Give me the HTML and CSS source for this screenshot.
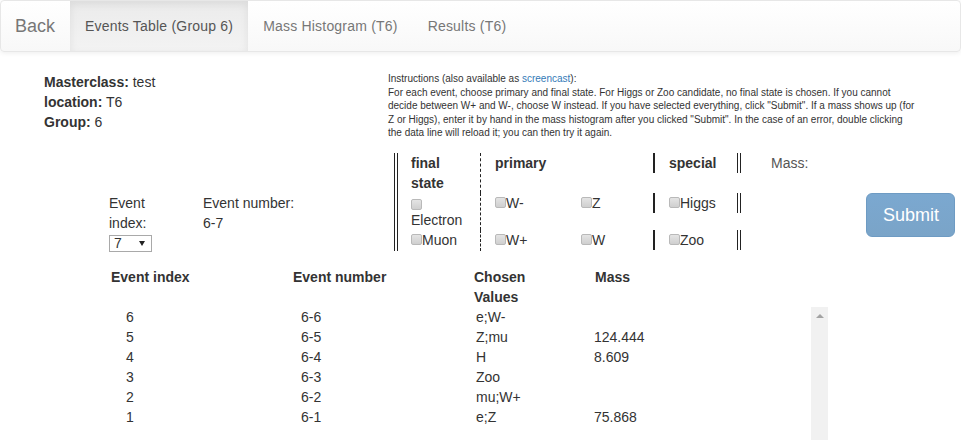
FILE: index.html
```html
<!DOCTYPE html>
<html lang="en">
<head>
    <meta charset="UTF-8">
    <title>Events Table (Group 6)</title>
    <link rel="stylesheet" href="styles.css">
</head>
<body>

    <!-- Navigation -->
    <nav class="navbar">
        <a class="brand" href="#">Back</a>
        <ul class="nav">
            <li class="active"><a href="#">Events Table (Group 6)</a></li>
            <li><a href="#">Mass Histogram (T6)</a></li>
            <li><a href="#">Results (T6)</a></li>
        </ul>
    </nav>

    <!-- Masterclass info + instructions -->
    <div class="top">
        <div class="info">
            <div><b>Masterclass:</b> test</div>
            <div><b>location:</b> T6</div>
            <div><b>Group:</b> 6</div>
        </div>
        <div class="instructions">
            Instructions (also available as <a href="#">screencast</a>):<br>
            For each event, choose primary and final state. For Higgs or Zoo candidate, no final state is chosen. If you cannot<br>
            decide between W+ and W-, choose W instead. If you have selected everything, click "Submit". If a mass shows up (for<br>
            Z or Higgs), enter it by hand in the mass histogram after you clicked "Submit". In the case of an error, double clicking<br>
            the data line will reload it; you can then try it again.
        </div>
    </div>

    <!-- Entry form -->
    <form class="entry">
        <div class="ev-index">
            <div>Event</div>
            <div>index:</div>
            <span class="ev-select">
                <select>
                    <option>7</option>
                </select>
            </span>
        </div>
        <div class="ev-number">
            <div>Event number:</div>
            <div>6-7</div>
        </div>

        <div class="final head">final<br>state</div>
        <div class="primary head">primary</div>
        <div class="special head"><span>special</span></div>
        <div class="mass-label">Mass:</div>

        <div class="final"><input type="checkbox" class="block-box">Electron</div>
        <div class="prim"><label><input type="checkbox">W-</label></div>
        <div class="prim"><label><input type="checkbox">Z</label></div>
        <div class="special"><label><input type="checkbox">Higgs</label></div>
        <button class="submit" type="button" disabled>Submit</button>

        <div class="final"><label><input type="checkbox">Muon</label></div>
        <div class="prim"><label><input type="checkbox">W+</label></div>
        <div class="prim"><label><input type="checkbox">W</label></div>
        <div class="special"><label><input type="checkbox">Zoo</label></div>
    </form>

    <!-- Events table -->
    <div class="events">
        <div class="events-head">
            <div>Event index</div>
            <div>Event number</div>
            <div>Chosen<br>Values</div>
            <div>Mass</div>
        </div>
        <div class="events-body">
            <div class="events-rows">
                <div>6</div><div>6-6</div><div>e;W-</div><div></div>
                <div>5</div><div>6-5</div><div>Z;mu</div><div>124.444</div>
                <div>4</div><div>6-4</div><div>H</div><div>8.609</div>
                <div>3</div><div>6-3</div><div>Zoo</div><div></div>
                <div>2</div><div>6-2</div><div>mu;W+</div><div></div>
                <div>1</div><div>6-1</div><div>e;Z</div><div>75.868</div>
            </div>
            <div class="rail"></div>
        </div>
    </div>

</body>
</html>
```

FILE: styles.css
```css
/* General Reset */
* {
    box-sizing: border-box;
}

body {
    margin: 0;
    font-family: "Liberation Sans", Arial, sans-serif;
    font-size: 14px;
    line-height: 20px;
    color: #333;
    background-color: #fff;
}

a {
    color: #337ab7;
    text-decoration: none;
}

/* Navbar */
.navbar {
    display: flex;
    height: 52px;
    margin-bottom: 20px;
    border: 1px solid #e7e7e7;
    border-radius: 4px;
    background-image: linear-gradient(to bottom, #fff 0, #f8f8f8 100%);
    box-shadow: inset 0 1px 0 rgba(255, 255, 255, 0.15), 0 1px 5px rgba(0, 0, 0, 0.075);
}

.navbar .brand {
    padding: 15px 15px 15px 14px;
    font-size: 18px;
    line-height: 20px;
    color: #777;
}

.nav {
    display: flex;
    list-style: none;
    margin: 0;
    padding: 0;
}

.nav a {
    display: block;
    padding: 15px;
    color: #777;
    letter-spacing: 0.2px;
}

.nav .active a {
    color: #555;
    background-image: linear-gradient(to bottom, #ebebeb 0, #f3f3f3 100%);
    box-shadow: inset 0 3px 9px rgba(0, 0, 0, 0.075);
}

/* Info and instructions */
.top {
    display: flex;
}

.info {
    width: 388px;
    padding-left: 44px;
}

.instructions {
    font-size: 10px;
    line-height: 13.5px;
    white-space: nowrap;
}

/* Entry form */
.entry {
    display: grid;
    grid-template-columns: 94px 191px 87px 86px 86px 88px 125px 89px;
    grid-template-rows: 40px 37px 21px;
    margin: 13px 0 0 109px;
}

.ev-index,
.ev-number {
    grid-row: 2 / 4;
}

.ev-select {
    position: relative;
    display: inline-block;
    margin-top: 2px;
}

.ev-select select {
    display: block;
    width: 43px;
    height: 17px;
    padding: 0 0 0 4px;
    border: 1px solid #a9a9a9;
    border-radius: 0;
    background: #fff;
    color: #333;
    font: 14px/15px "Liberation Sans", Arial, sans-serif;
    appearance: none;
    -webkit-appearance: none;
}

.ev-select::after {
    content: "";
    position: absolute;
    right: 7px;
    top: 6px;
    border-top: 5px solid #222;
    border-left: 3px solid transparent;
    border-right: 3px solid transparent;
    pointer-events: none;
}

.head {
    font-weight: bold;
}

.final {
    grid-column: 3;
    padding-left: 13px;
    border-left: 4px double #222;
    border-right: 1px dashed #222;
}

.primary {
    grid-column: 4 / 6;
    padding-left: 14px;
}

.prim {
    padding-left: 14px;
}

.special {
    grid-column: 6;
    align-self: start;
    height: 20px;
    padding-left: 14px;
    border-left: 2px solid #222;
    border-right: 4px double #222;
}

.mass-label {
    grid-column: 7;
    padding-left: 30px;
    color: #555;
}

input[type=checkbox] {
    width: 11px;
    height: 11px;
    margin: 0;
    border: 1px solid #b9b9b9;
    border-radius: 2px;
    background: linear-gradient(to bottom, #e4e4e4, #cfcfcf);
    vertical-align: baseline;
    appearance: none;
    -webkit-appearance: none;
}

.final .block-box {
    display: block;
    margin-top: 6px;
}

.submit {
    grid-column: 8;
    grid-row: 2 / 4;
    align-self: start;
    height: 44px;
    padding: 9px 16px;
    border: 1px solid #6e9bc3;
    border-radius: 6px;
    background-image: linear-gradient(to bottom, #7ba8d0 0, #7aa4c8 100%);
    color: #fff;
    font: 18px/24px "Liberation Sans", Arial, sans-serif;
}

/* Events table */
.events {
    margin-top: 16px;
}

.events-head {
    display: grid;
    grid-template-columns: 182px 181px 121px 100px;
    margin-left: 111px;
    font-weight: bold;
}

.events-body {
    display: flex;
    width: 717px;
    height: 150px;
    margin-left: 111px;
    overflow: hidden;
}

.events-rows {
    flex: 1;
    display: grid;
    grid-template-columns: 175px 175px 118px auto;
    grid-auto-rows: 20px;
    padding-left: 15px;
}

.rail {
    display: flex;
    justify-content: center;
    width: 17px;
    padding-top: 7px;
    background-color: #f1f1f1;
}

.rail::before {
    content: "";
    height: 0;
    border-bottom: 4px solid #a3a3a3;
    border-left: 4px solid transparent;
    border-right: 4px solid transparent;
}
```
